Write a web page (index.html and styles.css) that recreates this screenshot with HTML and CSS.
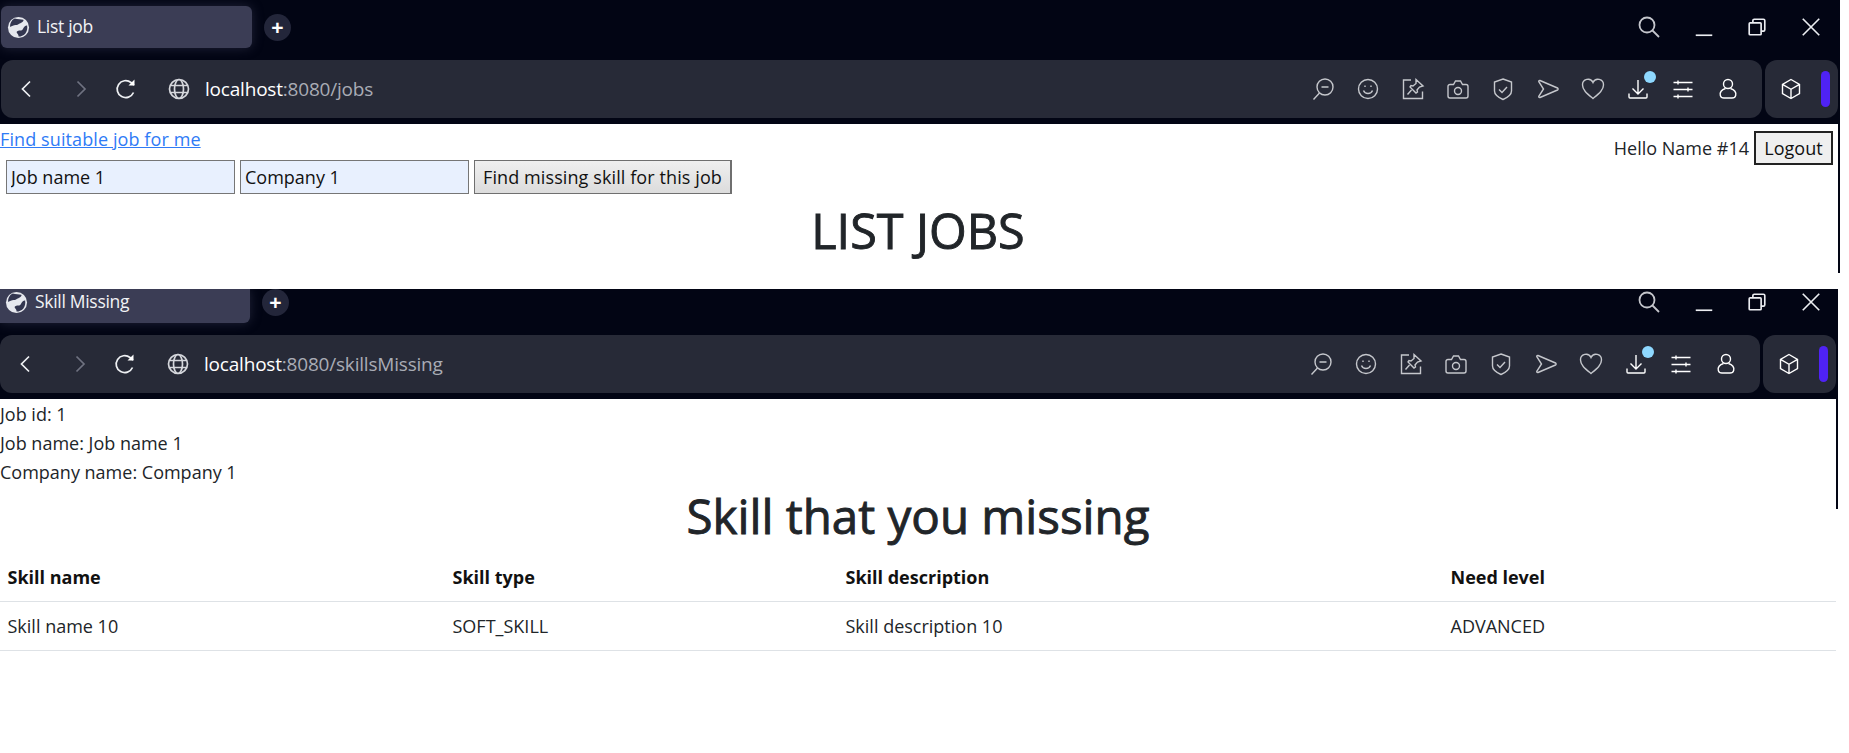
FILE: index.html
```html
<!DOCTYPE html>
<html lang="en">
<head>
<meta charset="utf-8">
<title>List job / Skill Missing</title>
<link rel="stylesheet" href="styles.css">
</head>
<body>
<svg class="defs" width="0" height="0" aria-hidden="true">
  <defs>
    <symbol id="i-globe-tab" viewBox="0 0 24 24">
      <circle cx="12" cy="12" r="11" fill="#e6e8ee"/>
      <path d="M8 2.500c3 1 7 .5 9 1.500 1 1-1 3-3 3.500-2 .5-3 2-5 2-2 .3-4 1-5.500 2C2.500 9 4.500 4 8 2.500zM21 10c.5 3 0 6-2 8.500-2 2-5 3.200-7 3 .5-2-1.500-3-2-4.500 0-1.500 2-2 4-2 2 .5 2.500-1.500 3.500-3 1-1.500 2.500-2.500 3.500-2z" fill="#333650"/>
    </symbol>
    <symbol id="i-search" viewBox="0 0 24 24"><circle cx="10" cy="10" r="7.500"/><path d="M15.500 15.500L22 22"/></symbol>
    <symbol id="i-min" viewBox="0 0 24 24"><path d="M3 21h18"/></symbol>
    <symbol id="i-restore" viewBox="0 0 24 24"><rect x="3.500" y="7.500" width="13" height="13" rx="1"/><path d="M7.500 7.500V5a1.500 1.500 0 0 1 1.500-1.500h10A1.500 1.500 0 0 1 20.500 5v10a1.500 1.500 0 0 1-1.500 1.500h-2.500"/></symbol>
    <symbol id="i-close" viewBox="0 0 24 24"><path d="M3 3l18 18M21 3L3 21"/></symbol>
    <symbol id="i-back" viewBox="0 0 24 24"><path d="M16 4.500L8.500 12l7.500 7.500"/></symbol>
    <symbol id="i-forward" viewBox="0 0 24 24"><path d="M8.500 4.500L16 12l-7.500 7.500"/></symbol>
    <symbol id="i-reload" viewBox="0 0 24 24"><path d="M19.500 15.500A8.500 8.500 0 1 1 17 5.500l3 2.500"/><path d="M20.500 2.500V8.500h-6" fill="#fff" stroke="none"/></symbol>
    <symbol id="i-globe" viewBox="0 0 24 24"><circle cx="12" cy="12" r="9.500"/><ellipse cx="12" cy="12" rx="4.500" ry="9.500"/><path d="M3 8.500h18M3 15.500h18"/></symbol>
    <symbol id="i-zoom" viewBox="0 0 24 24"><circle cx="14" cy="10" r="8"/><path d="M8.500 16L2.500 22.500M10.500 10h7"/></symbol>
    <symbol id="i-smile" viewBox="0 0 24 24"><circle cx="12" cy="12" r="9.500"/><path d="M7.500 13.500c1.500 4 7.500 4 9 0M9 8.500v1.500M15 8.500v1.500"/></symbol>
    <symbol id="i-pin" viewBox="0 0 24 24"><path d="M10 3H2.500V21.500H21.500V14.500"/><path d="M15 2.500l7 6.500-3.500 1-2.500 3 .5 2-1.500 1-6-6 1-1.500 2 .5 3-2.500zM10.500 13L6.500 17.500"/></symbol>
    <symbol id="i-camera" viewBox="0 0 24 24"><path d="M4 7.500h3.500l2-3.500h5l2 3.500H20a2 2 0 0 1 2 2V19a2 2 0 0 1-2 2H4a2 2 0 0 1-2-2V9.500a2 2 0 0 1 2-2z"/><circle cx="12" cy="14" r="3.500"/></symbol>
    <symbol id="i-shield" viewBox="0 0 24 24"><path d="M12 2l8.500 3v9c0 4-4 6.500-8.500 8.500C7.500 20.500 3.500 18 3.500 14V5z"/><path d="M8 12.500l3 3 5-5.500"/></symbol>
    <symbol id="i-send" viewBox="0 0 24 24"><path d="M4 3.500L21.500 11c.8.400.8 1.600 0 2L4 20.500c-.9.300-1.500-.4-1.200-1.200L7.500 12 2.800 4.700C2.500 3.900 3.100 3.200 4 3.500z"/></symbol>
    <symbol id="i-heart" viewBox="0 0 24 24"><path d="M12 21.500C6 16.500 1.500 13 1.500 8A5.500 5.500 0 0 1 12 5.500 5.500 5.500 0 0 1 22.500 8c0 5-4.500 8.500-10.500 13.500z"/></symbol>
    <symbol id="i-download" viewBox="0 0 24 24"><path d="M12 3v13.500M6.500 11.500l5.500 5.500 5.500-5.500M3 16.500V20a1 1 0 0 0 1 1h16a1 1 0 0 0 1-1v-3.500"/></symbol>
    <symbol id="i-sliders" viewBox="0 0 24 24"><path d="M2.500 5.500h19M2.500 12.500h19M2.500 19.500h19M7 3.500v4M17 10.500v4M7 17.500v4"/></symbol>
    <symbol id="i-user" viewBox="0 0 24 24"><circle cx="12" cy="7" r="4.500"/><path d="M9.500 11.500c-4 1-6 4-5.200 6.800.4 1.600 1.800 2.700 3.700 2.700h8c1.900 0 3.300-1.100 3.700-2.700.8-2.800-1.200-5.800-5.200-6.800"/></symbol>
    <symbol id="i-cube" viewBox="0 0 24 24"><path d="M12 2.500l8.500 4.800v9.400L12 21.500l-8.500-4.800V7.300zM3.500 7.300l8.500 5 8.500-5M12 12.300v9.200"/></symbol>
  </defs>
</svg>

<section class="window window-first">
  <header class="tabstrip">
    <div class="tab">
      <svg class="tab-icon"><use href="#i-globe-tab"/></svg>
      <span class="tab-title">List job</span>
    </div>
    <button class="new-tab" type="button">+</button>
    <div class="win-controls">
      <svg class="ctl ctl-search"><use href="#i-search"/></svg>
      <svg class="ctl"><use href="#i-min"/></svg>
      <svg class="ctl"><use href="#i-restore"/></svg>
      <svg class="ctl"><use href="#i-close"/></svg>
    </div>
  </header>
  <div class="bars">
    <nav class="toolbar">
      <svg class="nav-ic back"><use href="#i-back"/></svg>
      <svg class="nav-ic forward dim"><use href="#i-forward"/></svg>
      <svg class="nav-ic reload"><use href="#i-reload"/></svg>
      <svg class="nav-ic globe"><use href="#i-globe"/></svg>
      <span class="url"><b>localhost</b>:8080/jobs</span>
      <div class="tools">
        <svg class="tool"><use href="#i-zoom"/></svg>
        <svg class="tool"><use href="#i-smile"/></svg>
        <svg class="tool"><use href="#i-pin"/></svg>
        <svg class="tool"><use href="#i-camera"/></svg>
        <svg class="tool"><use href="#i-shield"/></svg>
        <svg class="tool"><use href="#i-send"/></svg>
        <svg class="tool"><use href="#i-heart"/></svg>
        <span class="tool-wrap"><svg class="tool bright"><use href="#i-download"/></svg><i class="badge"></i></span>
        <svg class="tool bright"><use href="#i-sliders"/></svg>
        <svg class="tool bright"><use href="#i-user"/></svg>
      </div>
    </nav>
    <div class="ext">
      <svg class="tool bright"><use href="#i-cube"/></svg>
      <i class="ext-pill"></i>
    </div>
  </div>
  <main class="page page-jobs">
    <div class="userbox">
      <span>Hello Name #14</span>
      <button class="logout" type="button">Logout</button>
    </div>
    <a class="link" href="#">Find suitable job for me</a>
    <form class="find-form">
      <input class="field" type="text" value="Job name 1">
      <input class="field" type="text" value="Company 1">
      <button class="find-btn" type="button">Find missing skill for this job</button>
    </form>
    <h1 class="title title-jobs">LIST JOBS</h1>
  </main>
</section>

<section class="window window-second">
  <header class="tabstrip tabstrip-cut">
    <div class="tab tab-cut">
      <svg class="tab-icon"><use href="#i-globe-tab"/></svg>
      <span class="tab-title">Skill Missing</span>
    </div>
    <button class="new-tab" type="button">+</button>
    <div class="win-controls">
      <svg class="ctl ctl-search"><use href="#i-search"/></svg>
      <svg class="ctl"><use href="#i-min"/></svg>
      <svg class="ctl"><use href="#i-restore"/></svg>
      <svg class="ctl"><use href="#i-close"/></svg>
    </div>
  </header>
  <div class="bars">
    <nav class="toolbar">
      <svg class="nav-ic back"><use href="#i-back"/></svg>
      <svg class="nav-ic forward dim"><use href="#i-forward"/></svg>
      <svg class="nav-ic reload"><use href="#i-reload"/></svg>
      <svg class="nav-ic globe"><use href="#i-globe"/></svg>
      <span class="url"><b>localhost</b>:8080/skillsMissing</span>
      <div class="tools">
        <svg class="tool"><use href="#i-zoom"/></svg>
        <svg class="tool"><use href="#i-smile"/></svg>
        <svg class="tool"><use href="#i-pin"/></svg>
        <svg class="tool"><use href="#i-camera"/></svg>
        <svg class="tool"><use href="#i-shield"/></svg>
        <svg class="tool"><use href="#i-send"/></svg>
        <svg class="tool"><use href="#i-heart"/></svg>
        <span class="tool-wrap"><svg class="tool bright"><use href="#i-download"/></svg><i class="badge"></i></span>
        <svg class="tool bright"><use href="#i-sliders"/></svg>
        <svg class="tool bright"><use href="#i-user"/></svg>
      </div>
    </nav>
    <div class="ext">
      <svg class="tool bright"><use href="#i-cube"/></svg>
      <i class="ext-pill"></i>
    </div>
  </div>
  <main class="page page-skills">
    <p class="info">Job id: 1</p>
    <p class="info">Job name: Job name 1</p>
    <p class="info">Company name: Company 1</p>
    <h1 class="title title-skills">Skill that you missing</h1>
    <table class="skills">
      <thead>
        <tr><th class="c1">Skill name</th><th class="c2">Skill type</th><th class="c3">Skill description</th><th>Need level</th></tr>
      </thead>
      <tbody>
        <tr><td>Skill name 10</td><td>SOFT_SKILL</td><td>Skill description 10</td><td>ADVANCED</td></tr>
      </tbody>
    </table>
  </main>
</section>
</body>
</html>
```

FILE: styles.css
```css
* { box-sizing: border-box; }
html, body { margin: 0; padding: 0; height: 100%; overflow: hidden; }
body {
  background: #fff;
  font-family: "Open Sans", "Noto Sans", sans-serif;
  font-size: 18px;
  color: #212529;
}
.defs { position: absolute; }

.window { position: relative; overflow: hidden; }
.window-first { width: 1840px; background: linear-gradient(#020514 124px, #fff 124px); }
.window-second { width: 1838px; background: linear-gradient(#020514 110px, #fff 110px); }

.tabstrip {
  height: 60px;
  padding: 6px 0 12px 1px;
  display: flex;
  align-items: center;
}
.tabstrip-cut { height: 46px; padding: 0 0 20px 0; }
.tab {
  width: 251px;
  height: 42px;
  background: #3b3d55;
  border-radius: 6px;
  display: flex;
  align-items: center;
  padding-left: 6px;
  box-shadow: 0 0 12px rgba(70, 72, 100, .45);
}
.tab-cut {
  width: 250px;
  height: 34px;
  margin-bottom: -8px;
  padding: 0 0 8px 5px;
  border-radius: 0 0 6px 0;
}
.tab-icon { width: 23px; height: 23px; flex: none; }
.tab-title { margin-left: 7px; color: #f2f3f6; font-size: 17.500px; letter-spacing: -.3px; line-height: 22px; margin-top: -2px; }
.new-tab {
  width: 27px;
  height: 27px;
  margin-left: 12px;
  padding: 0;
  border: 0;
  border-radius: 50%;
  background: #23263a;
  color: #fff;
  font: 700 21px/25px "Liberation Sans", sans-serif;
}
.win-controls {
  margin-left: auto;
  width: 185px;
  margin-right: 18px;
  display: flex;
  justify-content: space-between;
  align-items: center;
}
.window-second .win-controls { margin-right: 16px; }
.ctl { width: 22px; height: 22px; fill: none; stroke: #eceef2; stroke-width: 1.8; }
.ctl-search { stroke: #c4c6cc; width: 24px; height: 24px; }

.bars { display: flex; height: 58px; gap: 3px; padding-right: 2px; }
.toolbar {
  flex: 1;
  background: #272a37;
  border-radius: 12px;
  margin-left: 1px;
  display: flex;
  align-items: center;
  padding-left: 13px;
}
.window-second .toolbar { margin-left: 0; }
.nav-ic { width: 24px; height: 24px; fill: none; stroke: #eef0f3; stroke-width: 1.700; flex: none; }
.nav-ic.dim { stroke: #6f7280; }
.forward { margin-left: 31px; }
.reload { margin-left: 21px; }
.nav-ic.globe { stroke: #d5d7dc; margin-left: 29px; }
.url { margin-left: 14px; color: #a9acb5; font-size: 19px; letter-spacing: -.2px; }
.url b { font-weight: 400; color: #fff; }

.tools {
  margin-left: auto;
  display: flex;
  align-items: center;
  gap: 21px;
  padding-right: 22px;
}
.tool { width: 24px; height: 24px; fill: none; stroke: #c5c7cc; stroke-width: 1.400; display: block; flex: none; }
.tool.bright { stroke: #fff; }
.tool-wrap { position: relative; display: block; }
.badge {
  position: absolute;
  left: 18px;
  top: -6px;
  width: 12px;
  height: 12px;
  border-radius: 50%;
  background: #8ed8ff;
}
.ext {
  width: 73px;
  background: #272a37;
  border-radius: 12px;
  display: flex;
  align-items: center;
  padding-left: 14px;
  justify-content: space-between;
  padding-right: 8px;
}
.ext-pill { width: 9px; height: 36px; border-radius: 5px; background: #4f22f5; }

.page {
  background: #fff;
  border-radius: 12px 12px 0 0;
  margin-top: 6px;
  margin-right: 2px;
}
.page-jobs { height: 165px; padding-top: 1px; }
.page-skills { height: 354px; padding-top: 1px; }
.window-first::after,
.window-second::after {
  content: "";
  position: absolute;
  right: 0;
  width: 2px;
  background: #020514;
}
.window-first::after { top: 124px; height: 149px; }
.window-second::after { top: 110px; height: 110px; }

.link { display: inline-block; color: #2f7bf6; text-decoration: underline; line-height: 28px; letter-spacing: .1px; }
.userbox {
  float: right;
  display: flex;
  align-items: center;
  gap: 5px;
  margin: 6px 5px 0 0;
}
.logout {
  width: 79px;
  height: 34px;
  padding: 0;
  border: 2px solid #222;
  background: #efefef;
  color: #111;
  font: inherit;
}
.find-form { display: flex; gap: 5px; margin: 7px 0 0 6px; }
.field {
  width: 229px;
  height: 34px;
  border: 1px solid #767676;
  background: #e8f0fe;
  padding: 0 4px;
  font: inherit;
  color: #111;
  border-radius: 0;
}
.find-btn {
  width: 258px;
  height: 34px;
  padding: 0;
  border: 1px solid #6f6f6f;
  border-right-width: 2px;
  background: linear-gradient(#efefef, #dcdcdc);
  font: inherit;
  color: #111;
  letter-spacing: .1px;
}
.title { margin: 0; text-align: center; font-weight: 400; line-height: 58px; color: #212529; -webkit-text-stroke: .9px #212529; }
.title-jobs { font-size: 48.500px; margin-top: 7px; margin-right: 2px; }
.title-skills { font-size: 47.500px; }

.info { margin: 0; line-height: 29px; }

.skills { width: 100%; border-collapse: collapse; font-size: 18px; margin-top: 8px; table-layout: fixed; }
.skills th, .skills td {
  padding: 0 7px 0 7.500px;
  text-align: left;
  height: 49px;
  border-bottom: 1px solid #dee2e6;
  color: #212529;
}
.skills th { font-weight: 700; color: #111; height: 48px; }
.c1 { width: 445px; }
.c2 { width: 393px; }
.c3 { width: 605px; }
```
